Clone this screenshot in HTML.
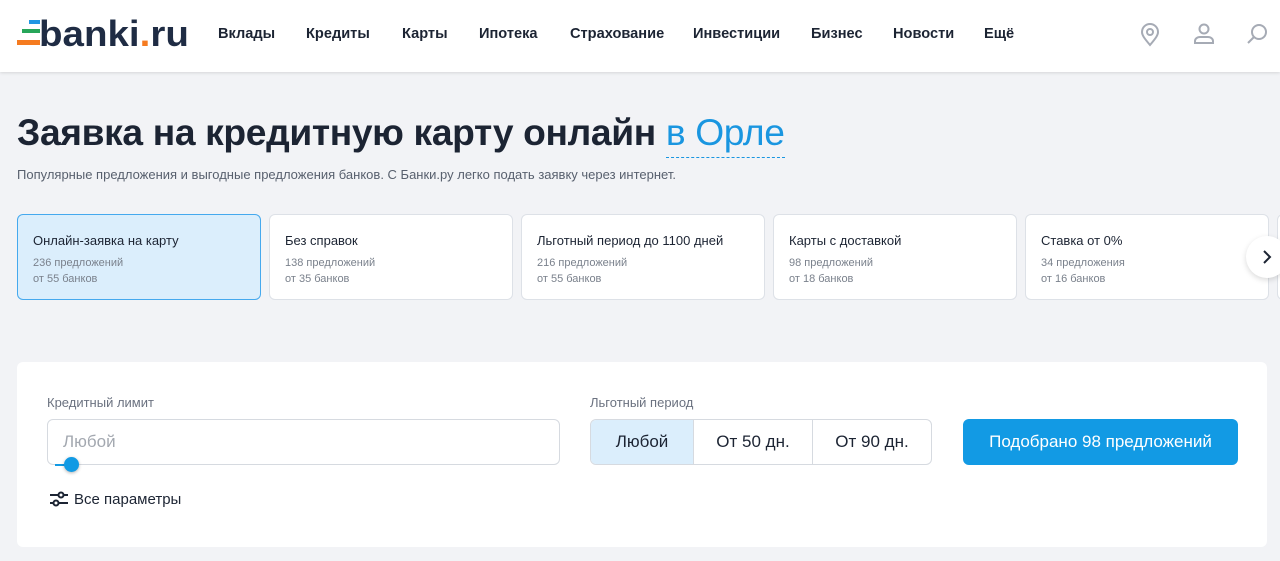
<!DOCTYPE html>
<html><head><meta charset="utf-8"><style>
*{box-sizing:border-box;margin:0;padding:0}
body{width:1280px;height:561px;overflow:hidden;background:#f2f3f6;font-family:"Liberation Sans",sans-serif;color:#1c2433;position:relative}
.hdr{position:absolute;left:0;top:0;width:1280px;height:72px;background:#fff;box-shadow:0 1px 3px rgba(0,0,0,.12)}
.logo{position:absolute;left:17px;top:17px;height:34px}
.logo .t{position:absolute;left:22px;top:-4px;font-size:36px;font-weight:bold;color:#1f2c44;letter-spacing:0px;transform:scaleX(1.07);transform-origin:left}
.nav{position:absolute;top:26px;font-size:14.6px;font-weight:bold;color:#1c2433}
h1{position:absolute;left:17px;top:111px;font-size:37.2px;font-weight:bold;color:#1c2433;letter-spacing:-0.35px}
h1 span{color:#1a96e0;font-weight:normal;border-bottom:1.5px dashed #1a96e0;padding-bottom:4px}
.sub{position:absolute;left:17px;top:167px;font-size:13px;color:#58606e}
.card{position:absolute;top:214px;width:244px;height:86px;background:#fff;border:1px solid #dde1e7;border-radius:6px;padding:18px 15px}
.card.a{background:#dbeefc;border-color:#45a9ee}
.card b{display:block;font-size:13px;font-weight:normal;color:#1c2433;margin-bottom:7px}
.card i{display:block;font-style:normal;font-size:11px;color:#7a818c;line-height:16px}
.arr{position:absolute;left:1246px;top:236px;width:42px;height:42px;border-radius:50%;background:#fff;box-shadow:0 2px 6px rgba(0,0,0,.15)}
.panel{position:absolute;left:17px;top:362px;width:1250px;height:185px;background:#fff;border-radius:6px}
.lbl{position:absolute;font-size:13px;color:#6b7280}
.inp{position:absolute;left:30px;top:57px;width:513px;height:46px;border:1px solid #d6dae0;border-radius:6px;font-size:17px;color:#a3a8b0;padding:12px 15px}
.seg{position:absolute;left:573px;top:57px;height:46px;display:flex;border:1px solid #d6dae0;border-radius:6px;overflow:hidden}
.seg div{height:44px;font-size:17px;line-height:44px;text-align:center;border-left:1px solid #d6dae0}
.btn{position:absolute;left:946px;top:57px;width:275px;height:46px;background:#129ae4;border-radius:6px;color:#fff;font-size:17px;text-align:center;line-height:46px}
</style></head><body>
<div class="hdr">
 <div class="logo">
  <div style="position:absolute;left:12px;top:3px;width:11px;height:4px;background:#2196e3"></div>
  <div style="position:absolute;left:5px;top:12px;width:18px;height:4px;background:#27a65a"></div>
  <div style="position:absolute;left:0;top:23px;width:23px;height:5px;background:#f57b20"></div>
  <div class="t">banki<span style="color:#f57b20">.</span>ru</div>
 </div>
 <div class="nav" style="left:218px">Вклады</div>
 <div class="nav" style="left:306px">Кредиты</div>
 <div class="nav" style="left:402px">Карты</div>
 <div class="nav" style="left:479px">Ипотека</div>
 <div class="nav" style="left:570px">Страхование</div>
 <div class="nav" style="left:693px">Инвестиции</div>
 <div class="nav" style="left:811px">Бизнес</div>
 <div class="nav" style="left:893px">Новости</div>
 <div class="nav" style="left:984px">Ещё</div>
 <svg style="position:absolute;left:1140px;top:23px" width="20" height="24" viewBox="0 0 20 24" fill="none" stroke="#a6abb5" stroke-width="2"><path d="M10 22C4 15 2 12 2 9a8 8 0 0 1 16 0c0 3-2 6-8 13z"/><circle cx="10" cy="9" r="3"/></svg>
 <svg style="position:absolute;left:1193px;top:23px" width="22" height="22" viewBox="0 0 22 22" fill="none" stroke="#a6abb5" stroke-width="2"><circle cx="11" cy="6" r="4.5"/><path d="M2 20v-2c0-2 2-4 5-4h8c3 0 5 2 5 4v2z"/></svg>
 <svg style="position:absolute;left:1246px;top:23px" width="22" height="22" viewBox="0 0 22 22" fill="none" stroke="#a6abb5" stroke-width="2"><circle cx="13" cy="9" r="7"/><path d="M8 14l-6 6"/></svg>
</div>
<h1>Заявка на кредитную карту онлайн <span>в Орле</span></h1>
<div class="sub">Популярные предложения и выгодные предложения банков. С Банки.ру легко подать заявку через интернет.</div>
<div class="card a" style="left:17px"><b>Онлайн-заявка на карту</b><i>236 предложений</i><i>от 55 банков</i></div>
<div class="card" style="left:269px"><b>Без справок</b><i>138 предложений</i><i>от 35 банков</i></div>
<div class="card" style="left:521px"><b>Льготный период до 1100 дней</b><i>216 предложений</i><i>от 55 банков</i></div>
<div class="card" style="left:773px"><b>Карты с доставкой</b><i>98 предложений</i><i>от 18 банков</i></div>
<div class="card" style="left:1025px"><b>Ставка от 0%</b><i>34 предложения</i><i>от 16 банков</i></div>
<div class="card" style="left:1277px"></div>
<div class="arr"><svg style="position:absolute;left:15px;top:13px" width="12" height="16" viewBox="0 0 12 16" fill="none" stroke="#1c2433" stroke-width="2"><path d="M3 2l6 6-6 6"/></svg></div>
<div class="panel">
 <div class="lbl" style="left:30px;top:33px">Кредитный лимит</div>
 <div class="inp">Любой</div>
 <div style="position:absolute;left:38px;top:102px;width:16px;height:2px;background:#129ae4"></div>
 <div style="position:absolute;left:47px;top:95px;width:15px;height:15px;border-radius:50%;background:#129ae4;box-shadow:0 1px 3px rgba(0,0,0,.3)"></div>
 <svg style="position:absolute;left:32px;top:128px" width="20" height="18" viewBox="0 0 20 18" fill="none" stroke="#1c2433" stroke-width="2"><path d="M1 5h8M15 5h4M1 13h3M10 13h9"/><circle cx="12" cy="5" r="2.5"/><circle cx="7" cy="13" r="2.5"/></svg>
 <div style="position:absolute;left:57px;top:129px;font-size:15px;color:#1c2433">Все параметры</div>
 <div class="lbl" style="left:573px;top:33px">Льготный период</div>
 <div class="seg"><div style="width:102px;border-left:0;background:#dbeefc">Любой</div><div style="width:119px">От 50 дн.</div><div style="width:119px">От 90 дн.</div></div>
 <div class="btn">Подобрано 98 предложений</div>
</div>
</body></html>
